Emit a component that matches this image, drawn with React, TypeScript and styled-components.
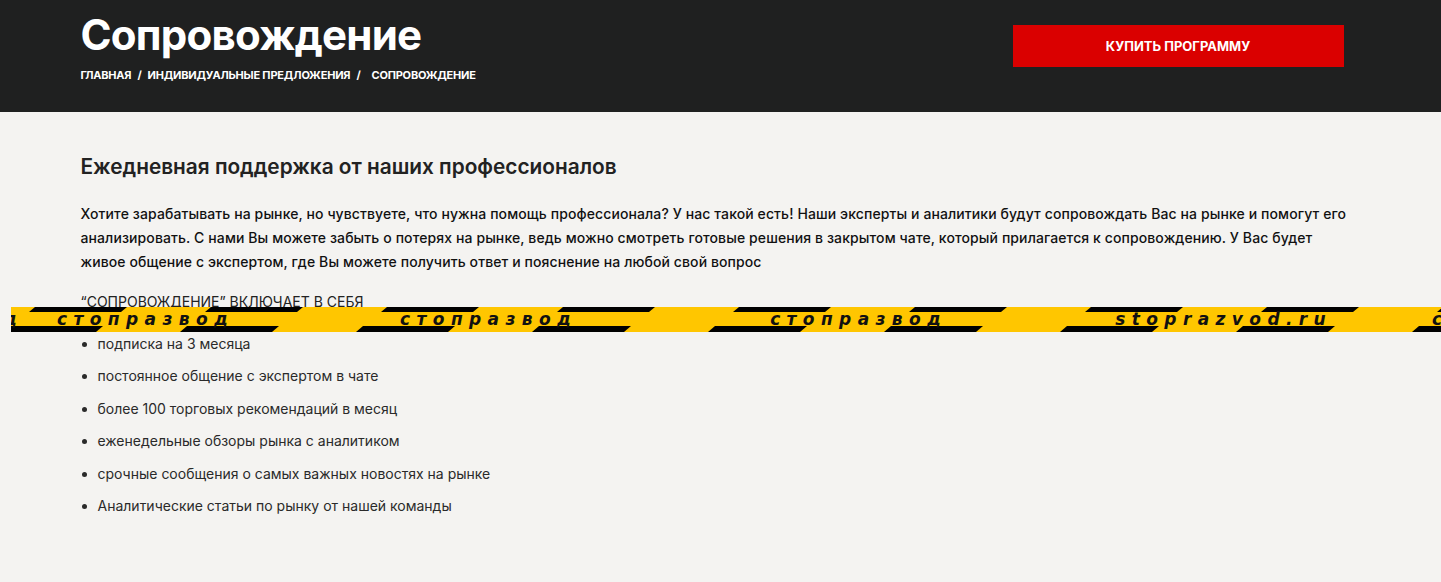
import styled, { createGlobalStyle } from 'styled-components'

const GlobalStyle = createGlobalStyle`
  html, body {
    margin: 0;
    padding: 0;
  }
  body {
    background: #f4f3f1;
    font-family: Inter, "Noto Sans", sans-serif;
    color: #1b1b1b;
  }
`;

const Page = styled.div`
  position: relative;
  min-height: 582px;
`;

const Header = styled.header`
  background: #1f2020;
  height: 112px;
  box-sizing: border-box;
`;

const Container = styled.div`
  max-width: 1280px;
  margin: 0 auto;
`;

const HeaderRow = styled(Container)`
  display: flex;
  justify-content: space-between;
  align-items: flex-start;
`;

const Title = styled.h1`
  margin: 0;
  padding-top: 11px;
  font-size: 42px;
  line-height: 48px;
  font-weight: 700;
  color: #fff;
  letter-spacing: -0.75px;
`;

const Crumbs = styled.nav`
  display: flex;
  margin-top: 9px;
  font-size: 11px;
  font-weight: 700;
  letter-spacing: -0.2px;
  text-transform: uppercase;
  color: #fff;
`;

const Crumb = styled.span<{ $gap?: number }>`
  margin-left: ${(p) => p.$gap ?? 0}px;
`;

const BuyButton = styled.button`
  width: 331px;
  height: 42px;
  margin: 25px 17px 0 0;
  border: none;
  background: #da0000;
  color: #fff;
  font-family: Inter, sans-serif;
  font-size: 13px;
  font-weight: 700;
  text-transform: uppercase;
  cursor: pointer;
`;

const Content = styled(Container)`
  padding-top: 40px;
`;

const Heading = styled.h2`
  margin: 0;
  font-size: 20.8px;
  line-height: 30px;
  font-weight: 600;
  color: #222;
`;

const Lead = styled.p`
  margin: 20px 0 0;
  max-width: 1266px;
  font-size: 14px;
  line-height: 24px;
  font-weight: 500;
  letter-spacing: 0.1px;
  color: #111;
`;

const ListTitle = styled.div`
  margin-top: 18px;
  font-size: 14px;
  line-height: 20px;
  color: #222;
`;

const List = styled.ul`
  margin: 22px 0 0;
  padding-left: 17px;
`;

const Item = styled.li`
  font-size: 14px;
  line-height: 20px;
  color: #2a2a2a;
  & + & {
    margin-top: 12.4px;
  }
`;

const Tape = styled.div`
  position: absolute;
  top: 307px;
  left: 11px;
  right: 0;
  height: 25px;
  overflow: hidden;
  background: #ffc600;
`;

const Stripes = styled.svg`
  position: absolute;
  inset: 0;
  width: 100%;
  height: 100%;
`;

const TapeWords = styled.div`
  position: relative;
  display: flex;
  align-items: center;
  height: 100%;
  white-space: nowrap;
`;

const Word = styled.span<{ $gap: number }>`
  margin-left: ${(p) => p.$gap}px;
  font-family: "DejaVu Sans", Verdana, sans-serif;
  font-style: italic;
  font-weight: 700;
  font-size: 17px;
  line-height: 25px;
  letter-spacing: 6.4px;
  color: #111;
`;

const tapeWords = [
  { text: 'стопразвод', gap: -165 },
  { text: 'стопразвод', gap: 34 },
  { text: 'стопразвод', gap: 166 },
  { text: 'стопразвод', gap: 193 },
  { text: 'stoprazvod.ru', gap: 168 },
  { text: 'стопразвод', gap: 100 },
];

const items = [
  'подписка на 3 месяца',
  'постоянное общение с экспертом в чате',
  'более 100 торговых рекомендаций в месяц',
  'еженедельные обзоры рынка с аналитиком',
  'срочные сообщения о самых важных новостях на рынке',
  'Аналитические статьи по рынку от нашей команды',
];

export default function App() {
  return (
    <Page>
      <GlobalStyle />
      <Header>
        <HeaderRow>
          <div>
            <Title>Сопровождение</Title>
            <Crumbs>
              <Crumb>Главная</Crumb>
              <Crumb $gap={6}>/</Crumb>
              <Crumb $gap={6}>Индивидуальные предложения</Crumb>
              <Crumb $gap={6}>/</Crumb>
              <Crumb $gap={11}>Сопровождение</Crumb>
            </Crumbs>
          </div>
          <BuyButton>Купить программу</BuyButton>
        </HeaderRow>
      </Header>

      <Content>
        <Heading>Ежедневная поддержка от наших профессионалов</Heading>
        <Lead>
          Хотите зарабатывать на рынке, но чувствуете, что нужна помощь профессионала? У нас такой есть! Наши эксперты и
          аналитики будут сопровождать Вас на рынке и помогут его анализировать. С нами Вы можете забыть о потерях на рынке,
          ведь можно смотреть готовые решения в закрытом чате, который прилагается к сопровождению. У Вас будет живое общение с
          экспертом, где Вы можете получить ответ и пояснение на любой свой вопрос
        </Lead>
        <ListTitle>“СОПРОВОЖДЕНИЕ” ВКЛЮЧАЕТ В СЕБЯ</ListTitle>
        <List>
          {items.map((it) => (
            <Item key={it}>{it}</Item>
          ))}
        </List>
      </Content>

      <Tape>
        <Stripes xmlns="http://www.w3.org/2000/svg">
          <defs>
            <pattern id="tape-stripes" x="-7" y="0" width="176" height="25" patternUnits="userSpaceOnUse">
              <polygon points="31,0 123,0 117,5 25,5" fill="#000" />
              <polygon points="7,19 99,19 92,25 0,25" fill="#000" />
            </pattern>
          </defs>
          <rect width="100%" height="100%" fill="url(#tape-stripes)" />
        </Stripes>
        <TapeWords>
          {tapeWords.map((w, i) => (
            <Word key={i} $gap={w.gap}>
              {w.text}
            </Word>
          ))}
        </TapeWords>
      </Tape>
    </Page>
  )
}
